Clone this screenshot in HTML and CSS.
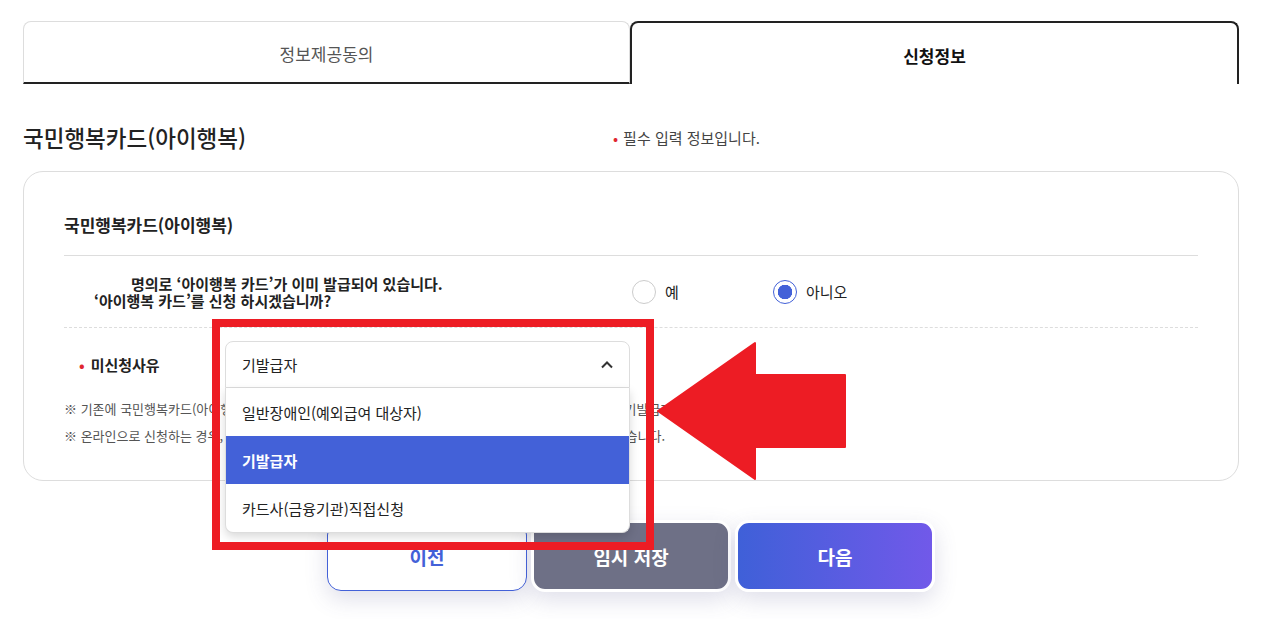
FILE: index.html
```html
<!DOCTYPE html>
<html lang="ko">
<head>
    <meta charset="UTF-8">
    <meta name="viewport" content="width=device-width, initial-scale=1.0">
    <title>신청정보</title>
    <link rel="stylesheet" href="styles.css">
</head>
<body>
    <div class="page">
        <div class="tabs">
            <div class="tab">정보제공동의</div>
            <div class="tab active">신청정보</div>
        </div>

        <div class="head-row">
            <h2 class="page-title">국민행복카드(아이행복)</h2>
            <p class="req-note"><span class="dot">•</span>필수 입력 정보입니다.</p>
        </div>

        <div class="card">
            <h3 class="card-title">국민행복카드(아이행복)</h3>

            <div class="row row-question">
                <div class="question">
                    <span class="name-mask"></span>명의로 ‘아이행복 카드’가 이미 발급되어 있습니다.<br>
                    ‘아이행복 카드’를 신청 하시겠습니까?
                </div>
                <div class="radios">
                    <label class="radio"><span class="circle"></span>예</label>
                    <label class="radio"><span class="circle checked"></span>아니오</label>
                </div>
            </div>

            <div class="row row-reason">
                <div class="reason-label"><span class="dot">•</span>미신청사유</div>
                <div class="select-wrap">
                    <div class="select">
                        <span>기발급자</span>
                        <svg class="chevron" width="14" height="14" viewBox="0 0 14 14">
                            <path d="M2 9.5 L7 4.5 L12 9.5" fill="none" stroke="#333" stroke-width="2"/>
                        </svg>
                    </div>
                    <ul class="options">
                        <li>일반장애인(예외급여 대상자)</li>
                        <li class="selected">기발급자</li>
                        <li>카드사(금융기관)직접신청</li>
                    </ul>
                </div>
            </div>

            <div class="notes">
                <p>※ 기존에 국민행복카드(아이행복)를 발급받으신 경우에는 추가 발급이 불가하므로 미신청사유를 반드시 기발급자로 선택해 주세요.</p>
                <p>※ 온라인으로 신청하는 경우, 선택하신 카드사에서 본인 확인을 위해 별도로 직접 전화 연락을 드릴 수 있습니다.</p>
            </div>
        </div>

        <div class="buttons">
            <button class="btn btn-prev">이전</button>
            <button class="btn btn-save">임시 저장</button>
            <button class="btn btn-next">다음</button>
        </div>

        <!-- 주석 표시 -->
        <div class="mark-box"></div>
        <svg class="mark-arrow" width="200" height="150" viewBox="650 335 200 150">
            <polygon points="658,411 755,343 755,375 845,375 845,447 755,447 755,479" fill="#ed1c24" stroke="#ed1c24" stroke-width="2" stroke-linejoin="round"/>
        </svg>
    </div>
</body>
</html>
```

FILE: styles.css
```css
* {
    margin: 0;
    padding: 0;
    box-sizing: border-box;
    font-family: "Noto Sans CJK KR", "Noto Sans", sans-serif;
}

body {
    background: #fff;
    color: #222;
}

.page {
    position: relative;
    width: 1262px;
    padding: 21px 23px 40px;
}

.tabs {
    display: flex;
    width: 1216px;
}

.tab {
    flex: 1;
    height: 63px;
    display: flex;
    align-items: center;
    justify-content: center;
    padding-top: 3px;
    font-size: 17px;
    color: #555;
    border: 1px solid #ddd;
    border-bottom: 2px solid #222;
    border-radius: 8px 8px 0 0;
}

.tab.active {
    color: #111;
    font-weight: bold;
    border: 2px solid #222;
    border-bottom: none;
}

.head-row {
    display: flex;
    align-items: center;
    height: 50px;
    margin-top: 28px;
}

.page-title {
    width: 590px;
    font-size: 22.5px;
    font-weight: 500;
    color: #222;
}

.req-note {
    font-size: 15px;
    color: #444;
}

.dot {
    color: #e0262f;
    margin-right: 5px;
}

.card {
    margin-top: 9px;
    width: 1216px;
    border: 1px solid #ddd;
    border-radius: 20px;
    padding: 40px 40px 31px;
}

.card-title {
    font-size: 17px;
    font-weight: bold;
    line-height: 26px;
    padding-bottom: 17px;
    border-bottom: 1px solid #ddd;
}

.row {
    display: flex;
    align-items: center;
}

.row-question {
    height: 72px;
    border-bottom: 1px dashed #ddd;
}

.question {
    width: 568px;
    padding-left: 30px;
    font-size: 15px;
    font-weight: bold;
    line-height: 17px;
    color: #222;
}

.name-mask {
    display: inline-block;
    width: 37px;
}

.radios {
    display: flex;
}

.radio {
    display: flex;
    align-items: center;
    gap: 9px;
    width: 141px;
    font-size: 15px;
    color: #222;
}

.circle {
    width: 24px;
    height: 24px;
    border-radius: 50%;
    border: 1px solid #ccc;
    background: #fff;
}

.circle.checked {
    border-color: #4361d8;
    background: radial-gradient(circle, #4361d8 0 7px, #fff 7.5px);
}

.row-reason {
    padding-top: 13px;
    height: 59px;
    align-items: flex-start;
}

.reason-label {
    width: 161px;
    padding-left: 15px;
    height: 46px;
    display: flex;
    align-items: center;
    font-size: 15px;
    font-weight: bold;
}

.reason-label .dot {
    margin-right: 6px;
}

.select-wrap {
    position: relative;
    width: 405px;
}

.select {
    height: 47px;
    display: flex;
    align-items: center;
    justify-content: space-between;
    padding: 0 15px 0 16px;
    border: 1px solid #ddd;
    border-radius: 8px 8px 0 0;
    font-size: 15px;
    color: #222;
    background: #fff;
}

.options {
    position: absolute;
    top: 47px;
    left: 0;
    width: 405px;
    list-style: none;
    background: #fff;
    border: 1px solid #ddd;
    border-top: none;
    border-radius: 0 0 8px 8px;
    box-shadow: 0 4px 10px rgba(0, 0, 0, 0.15);
    z-index: 5;
    overflow: hidden;
}

.options li {
    height: 48px;
    display: flex;
    align-items: center;
    padding-left: 16px;
    font-size: 15px;
    color: #222;
}

.options li.selected {
    background: #4361d8;
    color: #fff;
    font-weight: bold;
}

.notes {
    margin-top: 8px;
}

.notes p {
    font-size: 13px;
    line-height: 27px;
    color: #555;
    white-space: nowrap;
}

.buttons {
    display: flex;
    justify-content: center;
    gap: 4px;
    width: 1216px;
    margin-top: 39px;
}

.btn {
    width: 200px;
    height: 72px;
    border-radius: 14px;
    border: 3px solid #fff;
    font-size: 19px;
    font-weight: bold;
    color: #fff;
    cursor: pointer;
    box-shadow: 0 8px 22px rgba(80, 80, 140, 0.18);
}

.btn-prev {
    background: #fff;
    color: #4361d8;
    border: 1px solid #4361d8;
    height: 70px;
    margin-top: 1px;
}

.btn-save {
    background: #6e7086;
}

.btn-next {
    background: linear-gradient(90deg, #3f60d8, #7159e9);
}

.mark-box {
    position: absolute;
    left: 212px;
    top: 319px;
    width: 442px;
    height: 231px;
    border: 8px solid #ed1c24;
    z-index: 6;
}

.mark-arrow {
    position: absolute;
    left: 650px;
    top: 335px;
    z-index: 6;
}
```
